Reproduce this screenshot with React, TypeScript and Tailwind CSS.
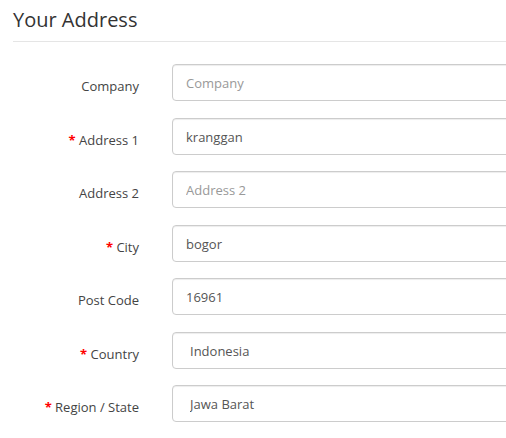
import React from 'react';

interface Field {
  label: string;
  required?: boolean;
  value?: string;
  placeholder?: string;
  select?: boolean;
}

const fields: Field[] = [
  { label: 'Company', placeholder: 'Company' },
  { label: 'Address 1', required: true, value: 'kranggan' },
  { label: 'Address 2', placeholder: 'Address 2' },
  { label: 'City', required: true, value: 'bogor' },
  { label: 'Post Code', value: '16961' },
  { label: 'Country', required: true, value: 'Indonesia', select: true },
  { label: 'Region / State', required: true, value: 'Jawa Barat', select: true },
];

const App: React.FC = () => {
  return (
    <div
      className="w-[506px] h-[438px] overflow-hidden bg-white pl-[13px]"
      style={{ fontFamily: '"Open Sans", "Liberation Sans", sans-serif' }}
    >
      <h2 className="pt-[9px] text-[20px] leading-[22px] text-[#333] font-normal">Your Address</h2>
      <div className="mt-[10px] border-t border-[#e5e5e5]" />
      <form className="mt-[22px] flex flex-col gap-[16.5px]">
        {fields.map(f => (
          <div key={f.label} className="flex items-start">
            <label className="w-[159px] shrink-0 pr-[33px] pt-[13px] text-right text-[13px] leading-[18px] text-[#444]">
              {f.required && <span className="font-bold text-[#f00]">* </span>}
              {f.label}
            </label>
            <input
              readOnly
              type="text"
              defaultValue={f.value}
              placeholder={f.placeholder}
              className={`w-[380px] shrink-0 h-[37px] rounded-[4px] border border-[#ccc] bg-white pt-[9px] pb-[8px] text-[13px] leading-[18px] text-[#555] placeholder:text-[#999] shadow-[inset_0_1px_1px_rgba(0,0,0,0.075)] outline-none ${
                f.select ? 'pl-[17px]' : 'pl-[13px]'
              }`}
            />
          </div>
        ))}
      </form>
    </div>
  );
};

export default App;
